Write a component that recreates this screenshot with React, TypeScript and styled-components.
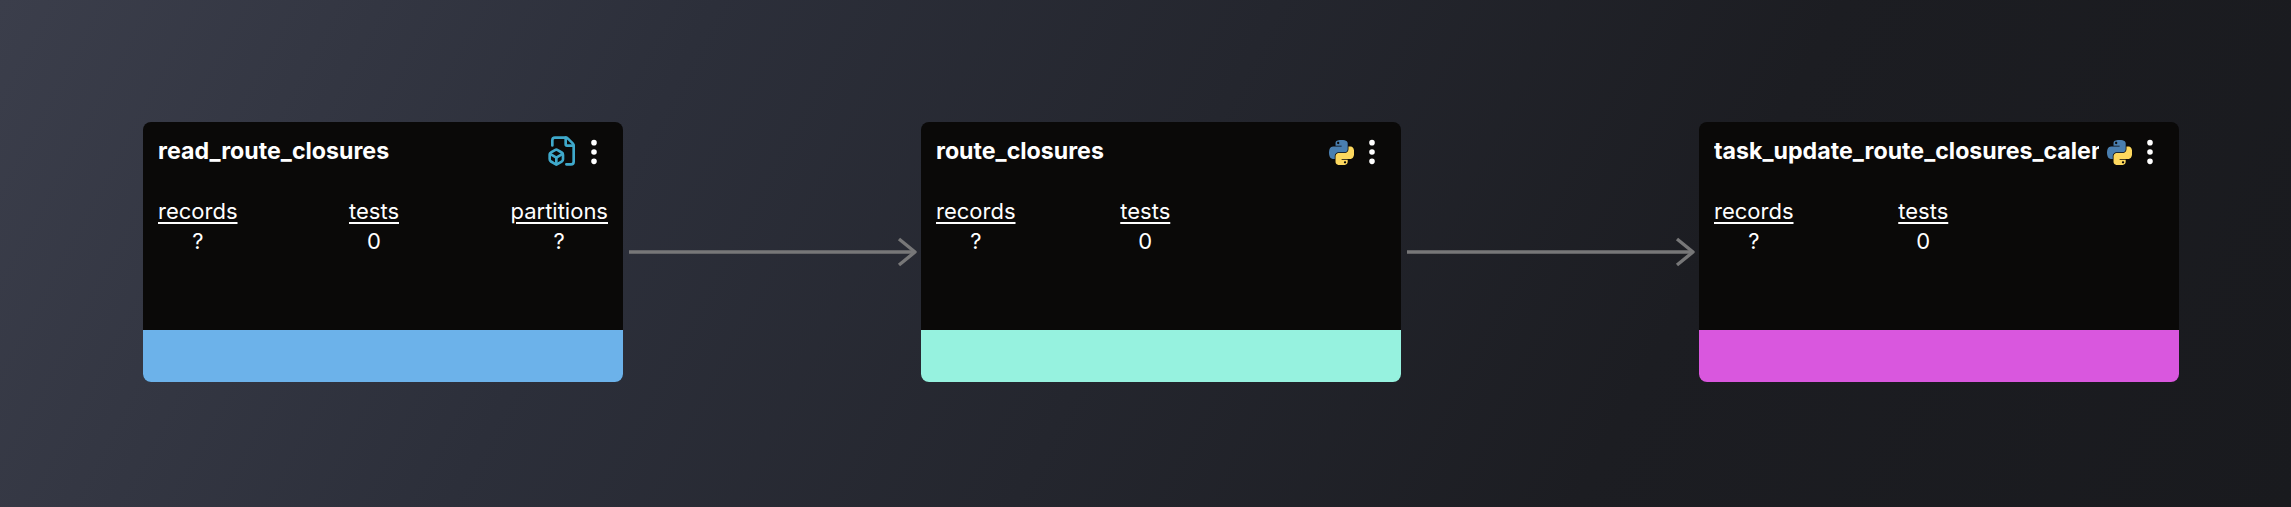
import { FC } from "react";
import styled, { createGlobalStyle } from "styled-components";
import { EllipsisVertical, FileBox } from "lucide-react";

const GlobalStyle = createGlobalStyle`
  html, body {
    margin: 0;
    padding: 0;
    height: 100%;
    background: #1b1c20;
  }
`;

const Canvas = styled.div`
  width: 2291px;
  height: 507px;
  box-sizing: border-box;
  padding: 122px 112px 0 143px;
  display: flex;
  align-items: flex-start;
  overflow: hidden;
  background: linear-gradient(118deg, #3b3e4b 0%, #2c2f3a 28%, #24262e 50%, #1c1d22 72%, #191a1e 100%);
  font-family: Inter, "Liberation Sans", sans-serif;
  color: #fff;
`;

const Card = styled.div`
  width: 480px;
  height: 260px;
  flex: none;
  display: flex;
  flex-direction: column;
  background: #0a0908;
  border-radius: 8px;
  overflow: hidden;
`;

const Body = styled.div`
  flex: 1;
  padding: 14px 15px 0;
`;

const Header = styled.div`
  height: 32px;
  display: flex;
  align-items: center;
  gap: 8px;
`;

const Title = styled.div`
  flex: 1;
  min-width: 0;
  padding-bottom: 2px;
  font-size: 23.2px;
  font-weight: 700;
  white-space: nowrap;
  overflow: hidden;
`;

const Menu = styled(EllipsisVertical)`
  flex: none;
  margin: 0 -2px 0 -6px;
  stroke-width: 2.2;
`;

const TypeIcon = styled(FileBox)`
  flex: none;
  color: #3fa9cb;
  margin: -2px -3px 0 0;
`;

const Stats = styled.div`
  margin-top: 28px;
  display: flex;
  justify-content: space-between;
`;

const Stat = styled.div`
  display: flex;
  flex-direction: column;
  align-items: center;
  font-size: 22px;
  line-height: 30px;
`;

const StatLabel = styled.span`
  text-decoration: underline;
  text-underline-offset: 3px;
`;

const StatSpacer = styled.div`
  width: 111px;
`;

const Footer = styled.div<{ $color: string }>`
  height: 52px;
  background: ${(p) => p.$color};
`;

const Edge = styled.svg`
  flex: none;
  width: 298px;
  height: 40px;
  margin-top: 110px;
`;

const PythonIcon = styled.svg`
  flex: none;
  width: 25px;
  height: 25px;
`;

const PythonLogo: FC = () => (
  <PythonIcon viewBox="0 0 110 110">
    <path
      fill="#4a7fb0"
      d="M54.919 0.001c-4.584.022-8.961.413-12.813 1.095C30.76 3.099 28.7 7.295 28.7 15.032v10.219h26.813v3.406H18.638c-7.793 0-14.616 4.684-16.75 13.594-2.462 10.213-2.571 16.586 0 27.25 1.905 7.938 6.457 13.594 14.25 13.594h9.219V70.844c0-8.885 7.688-16.719 16.813-16.719h26.781c7.454 0 13.406-6.138 13.406-13.625V15.032c0-7.266-6.13-12.725-13.406-13.937-4.606-.766-9.385-1.115-13.969-1.094zM40.419 8.22c2.77 0 5.031 2.299 5.031 5.125 0 2.816-2.262 5.094-5.031 5.094-2.78 0-5.031-2.278-5.031-5.094 0-2.826 2.252-5.125 5.031-5.125z"
    />
    <path
      fill="#fdd85e"
      d="M85.638 28.657v11.906c0 9.231-7.826 17-16.75 17H42.106c-7.336 0-13.406 6.278-13.406 13.625v25.531c0 7.266 6.319 11.54 13.406 13.625 8.487 2.496 16.626 2.947 26.781 0 6.75-1.954 13.406-5.888 13.406-13.625V86.5H55.513v-3.406H95.7c7.793 0 10.696-5.436 13.406-13.594 2.799-8.399 2.68-16.476 0-27.25-1.926-7.757-5.604-13.594-13.406-13.594zM70.575 93.313c2.78 0 5.031 2.278 5.031 5.094 0 2.826-2.252 5.125-5.031 5.125-2.77 0-5.031-2.299-5.031-5.125 0-2.816 2.262-5.094 5.031-5.094z"
    />
  </PythonIcon>
);

const Arrow: FC = () => (
  <Edge viewBox="0 0 298 40" fill="none" stroke="#777778" strokeWidth="3.4" strokeLinejoin="round">
    <path d="M6 20H292" />
    <path d="M276 7L292 20L276 33" />
  </Edge>
);

type NodeProps = {
  name: string;
  color: string;
  kind: "file" | "python";
};

const Node: FC<NodeProps> = ({ name, color, kind }) => (
  <Card>
    <Body>
      <Header>
        <Title>{name}</Title>
        {kind === "file" ? <TypeIcon size={32} strokeWidth={2} /> : <PythonLogo />}
        <Menu size={32} />
      </Header>
      <Stats>
        <Stat>
          <StatLabel>records</StatLabel>
          <span>?</span>
        </Stat>
        <Stat>
          <StatLabel>tests</StatLabel>
          <span>0</span>
        </Stat>
        {kind === "file" ? (
          <Stat>
            <StatLabel>partitions</StatLabel>
            <span>?</span>
          </Stat>
        ) : (
          <StatSpacer />
        )}
      </Stats>
    </Body>
    <Footer $color={color} />
  </Card>
);

export default function App() {
  return (
    <Canvas>
      <GlobalStyle />
      <Node name="read_route_closures" color="#6cb2ea" kind="file" />
      <Arrow />
      <Node name="route_closures" color="#96f2df" kind="python" />
      <Arrow />
      <Node name="task_update_route_closures_calendar" color="#d957de" kind="python" />
    </Canvas>
  );
}
